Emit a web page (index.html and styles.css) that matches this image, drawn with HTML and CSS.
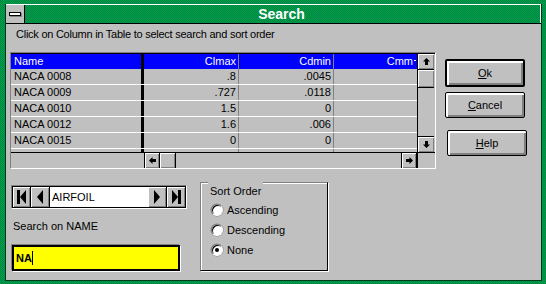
FILE: index.html
```html
<!DOCTYPE html>
<html lang="en">
<head>
  <meta charset="UTF-8">
  <title>Search</title>
  <link rel="stylesheet" href="styles.css">
</head>
<body>
  <div class="window">
    <div class="frame">
      <div class="titlebar">
        <div class="sysmenu"><span class="sysbar"></span></div>
        <div class="title">Search</div>
      </div>
      <div class="client">
        <p class="hint">Click on Column in Table to select search and sort order</p>
        <div class="main">
          <div class="left">
            <div class="grid">
              <div class="grid-top">
                <div class="rows">
                  <div class="row head">
                    <span class="c name">Name</span><span class="c num">Clmax</span><span class="c num">Cdmin</span><span class="c cmm">Cmm<span class="cut"></span></span>
                  </div>
                  <div class="row">
                    <span class="c name">NACA 0008</span><span class="c num">.8</span><span class="c num">.0045</span><span class="c cmm"></span>
                  </div>
                  <div class="row">
                    <span class="c name">NACA 0009</span><span class="c num">.727</span><span class="c num">.0118</span><span class="c cmm"></span>
                  </div>
                  <div class="row">
                    <span class="c name">NACA 0010</span><span class="c num">1.5</span><span class="c num">0</span><span class="c cmm"></span>
                  </div>
                  <div class="row">
                    <span class="c name">NACA 0012</span><span class="c num">1.6</span><span class="c num">.006</span><span class="c cmm"></span>
                  </div>
                  <div class="row">
                    <span class="c name">NACA 0015</span><span class="c num">0</span><span class="c num">0</span><span class="c cmm"></span>
                  </div>
                  <div class="row">
                    <span class="c name"></span><span class="c num"></span><span class="c num"></span><span class="c cmm"></span>
                  </div>
                </div>
                <div class="vscroll">
                  <span class="sb-btn">
                    <svg width="7" height="7" viewBox="0 0 7 7"><polygon points="3.5,0 7,3.5 5,3.5 5,7 2,7 2,3.5 0,3.5"/></svg>
                  </span>
                  <span class="sb-thumb"></span>
                  <span class="sb-track"></span>
                  <span class="sb-btn">
                    <svg width="7" height="7" viewBox="0 0 7 7"><polygon points="3.5,7 7,3.5 5,3.5 5,0 2,0 2,3.5 0,3.5"/></svg>
                  </span>
                </div>
              </div>
              <div class="grid-foot">
                <span class="foot-name"></span>
                <div class="hscroll">
                  <span class="sb-btn">
                    <svg width="7" height="7" viewBox="0 0 7 7"><polygon points="0,3.5 3.5,0 3.5,2 7,2 7,5 3.5,5 3.5,7"/></svg>
                  </span>
                  <span class="sb-thumb"></span>
                  <span class="sb-track"></span>
                  <span class="sb-btn">
                    <svg width="7" height="7" viewBox="0 0 7 7"><polygon points="7,3.5 3.5,0 3.5,2 0,2 0,5 3.5,5 3.5,7"/></svg>
                  </span>
                </div>
                <span class="corner"></span>
              </div>
            </div>

            <div class="bottom">
              <div class="nav-col">
                <div class="nav">
                  <span class="nav-btn">
                    <svg width="10" height="14" viewBox="0 0 10 14"><rect x="0" y="0" width="3" height="14"/><polygon points="3,7 9,0 9,14"/></svg>
                  </span>
                  <span class="nav-btn">
                    <svg width="8" height="14" viewBox="0 0 8 14"><polygon points="1,7 7,0 7,14"/></svg>
                  </span>
                  <span class="nav-field">AIRFOIL</span>
                  <span class="nav-btn">
                    <svg width="8" height="14" viewBox="0 0 8 14"><polygon points="7,7 1,0 1,14"/></svg>
                  </span>
                  <span class="nav-btn">
                    <svg width="10" height="14" viewBox="0 0 10 14"><polygon points="1,0 7,7 1,14"/><rect x="7" y="0" width="3" height="14"/></svg>
                  </span>
                </div>
                <div class="search-label">Search on NAME</div>
                <div class="search-box"><span class="search-text">NA</span><span class="caret"></span></div>
              </div>

              <div class="group">
                <div class="group-title">Sort Order</div>
                <div class="radio-list">
                  <div class="radio-row"><span class="radio"></span>Ascending</div>
                  <div class="radio-row"><span class="radio"></span>Descending</div>
                  <div class="radio-row"><span class="radio"><span class="dot"></span></span>None</div>
                </div>
              </div>
            </div>
          </div>

          <div class="buttons">
            <div class="btn default"><u>O</u>k</div>
            <div class="btn cancel"><u>C</u>ancel</div>
            <div class="btn help"><u>H</u>elp</div>
          </div>
        </div>
      </div>
    </div>
  </div>
</body>
</html>
```

FILE: styles.css
```css
body {
    margin: 0;
    font-family: "Liberation Sans", Arial, sans-serif;
    font-size: 11px;
    color: #000;
    overflow: hidden;
}

.window {
    width: 546px;
    height: 284px;
    box-sizing: border-box;
    padding: 4px 4px 4px 5px;
    background-color: #00843f;
    background-image: conic-gradient(#00a04c 25%, transparent 0 50%, #00a04c 0 75%, transparent 0);
    background-size: 2px 2px;
}

.frame {
    height: 100%;
    display: flex;
    flex-direction: column;
    border: 1px solid #003a1c;
    border-top: 0;
}

/* title bar */
.titlebar {
    display: flex;
    height: 18px;
    border-top: 1px solid #fff;
    border-bottom: 1px solid #000;
}

.sysmenu {
    width: 18px;
    background: #c0c0c0;
    border-right: 1px solid #000;
    display: flex;
    align-items: center;
    justify-content: center;
}

.sysbar {
    width: 10px;
    height: 2px;
    background: #fff;
    border: 1px solid #000;
    box-shadow: 1px 1px 0 #808080;
}

.title {
    flex: 1;
    border-right: 1px solid #fff;
    color: #fff;
    font-weight: bold;
    font-size: 14px;
    line-height: 18px;
    text-align: center;
    padding-right: 2px;
    background-color: #00843f;
    background-image: conic-gradient(#00a04c 25%, transparent 0 50%, #00a04c 0 75%, transparent 0);
    background-size: 2px 2px;
}

/* client area */
.client {
    flex: 1;
    background: #c0c0c0;
    padding: 0 0 0 4px;
}

.hint {
    margin: 4px 0 0 6px;
    line-height: 13px;
    letter-spacing: -0.25px;
}

.main {
    display: flex;
    margin-top: 11px;
}

.left {
    width: 426px;
}

/* table */
.grid {
    width: 426px;
    height: 117px;
    box-sizing: border-box;
    border: 1px solid;
    border-color: #808080 #fff #fff #808080;
    display: flex;
    flex-direction: column;
}

.grid-top {
    display: flex;
    height: 98px;
    border-top: 1px solid #000;
}

.rows {
    width: 406px;
    overflow: hidden;
}

.row {
    display: flex;
    height: 15px;
    line-height: 15px;
    border-bottom: 1px solid #fff;
}

.row.head {
    background: #0000ff;
    color: #fff;
    border-bottom: 0;
}

.c {
    display: block;
    overflow: hidden;
    white-space: nowrap;
}

.name {
    width: 133px;
    padding-left: 3px;
    box-sizing: border-box;
    border-right: 3px solid #000;
}

.num {
    width: 95px;
    text-align: right;
    padding-right: 2px;
    box-sizing: border-box;
    border-right: 1px solid #808080;
}

.cmm {
    width: 83px;
    text-align: right;
    padding-right: 1px;
    box-sizing: border-box;
}

.cut {
    display: inline-block;
    width: 2px;
    height: 1px;
    margin-left: 1px;
    vertical-align: 4px;
    background: #fff;
}

.vscroll {
    width: 16px;
    border-left: 1px solid #000;
    display: flex;
    flex-direction: column;
}

.sb-btn,
.sb-thumb {
    display: flex;
    align-items: center;
    justify-content: center;
    width: 16px;
    height: 16px;
    box-sizing: border-box;
    background: #c0c0c0;
    box-shadow: inset 1px 1px 0 #fff, inset -1px -1px 0 #808080;
}

.vscroll .sb-btn,
.vscroll .sb-thumb {
    border-bottom: 1px solid #000;
}

.vscroll .sb-thumb {
    height: 18px;
}

.sb-track {
    flex: 1;
    background: #c0c0c0;
}

.vscroll .sb-btn:last-child {
    border-top: 1px solid #000;
    border-bottom: 0;
}

.grid-foot {
    display: flex;
    flex: 1;
    border-top: 1px solid #000;
}

.foot-name {
    width: 133px;
    background: #c0c0c0;
}

.hscroll {
    width: 273px;
    display: flex;
}

.hscroll .sb-btn,
.hscroll .sb-thumb {
    height: 15px;
    border-right: 1px solid #000;
}

.hscroll .sb-btn:first-child {
    border-left: 1px solid #000;
}

.hscroll .sb-btn:last-child {
    border-left: 1px solid #000;
}

.corner {
    flex: 1;
    border-left: 1px solid #000;
    background: #c0c0c0;
}

/* bottom controls */
.bottom {
    display: flex;
    margin-top: 13px;
}

.nav-col {
    width: 190px;
}

.nav {
    display: flex;
    width: 176px;
    height: 24px;
    box-sizing: border-box;
    margin: 3px 0 0 1px;
    border: 1px solid;
    border-color: #808080 #fff #fff #808080;
}

.nav-btn {
    display: flex;
    align-items: center;
    justify-content: center;
    width: 19px;
    box-sizing: border-box;
    background: #c0c0c0;
    border: 1px solid #000;
    border-left: 0;
    box-shadow: inset 1px 1px 0 #fff, inset -1px -1px 0 #808080;
}

.nav-btn:first-child {
    width: 19px;
    border-left: 1px solid #000;
}

.nav-field {
    width: 96px;
    background: #fff;
    border-top: 1px solid #000;
    border-bottom: 1px solid #000;
    padding-left: 2px;
    line-height: 20px;
}

.search-label {
    margin: 11px 0 0 3px;
    line-height: 13px;
}

.search-box {
    display: flex;
    align-items: center;
    width: 168px;
    height: 26px;
    box-sizing: border-box;
    margin: 12px 0 0 2px;
    background: #ffff00;
    border: 2px solid #000;
    box-shadow: 1px 1px 0 #fff, -1px -1px 0 #808080;
    padding-left: 2px;
}

.search-text {
    font-weight: bold;
}

.caret {
    width: 1px;
    height: 14px;
    background: #000;
}

.group {
    width: 128px;
    height: 89px;
    box-sizing: border-box;
    border: 1px solid;
    border-color: #808080 #000 #000 #808080;
    box-shadow: 1px 1px 0 #fff, inset 1px 1px 0 #fff;
    padding-left: 10px;
}

.group-title {
    width: fit-content;
    margin: -2px 0 0 -3px;
    padding: 4px 2px 0;
    line-height: 13px;
    background: #c0c0c0;
}

.radio-list {
    margin-top: 2px;
}

.radio-row {
    display: flex;
    align-items: center;
    gap: 4px;
    height: 20px;
}

.radio {
    display: flex;
    align-items: center;
    justify-content: center;
    width: 12px;
    height: 12px;
    box-sizing: border-box;
    border-radius: 50%;
    background: #fff;
    border: 1px solid;
    border-color: #808080 #fff #fff #808080;
    box-shadow: inset 1px 1px 0 #000, 0 0 0 0.5px #808080;
}

.dot {
    width: 4px;
    height: 4px;
    border-radius: 50%;
    background: #000;
}

/* push buttons */
.buttons {
    display: flex;
    flex-direction: column;
    margin: 7px 0 0 9px;
}

.btn {
    width: 80px;
    height: 26px;
    box-sizing: border-box;
    border: 1px solid #000;
    border-radius: 2px;
    background: #c0c0c0;
    box-shadow: inset 2px 2px 0 #fff, inset -2px -2px 0 #808080;
    display: flex;
    align-items: center;
    justify-content: center;
}

.btn.default {
    height: 28px;
    border-width: 2px;
}

.btn.cancel {
    margin-top: 5px;
}

.btn.help {
    margin: 12px 0 0 2px;
}
```
